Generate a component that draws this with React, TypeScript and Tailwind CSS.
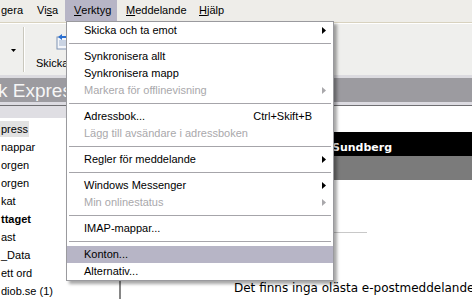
import React from "react";

type Item = {
  label?: string;
  sep?: boolean;
  disabled?: boolean;
  sub?: boolean;
  shortcut?: string;
  active?: boolean;
};

const items: Item[] = [
  { label: "Skicka och ta emot", sub: true },
  { sep: true },
  { label: "Synkronisera allt" },
  { label: "Synkronisera mapp" },
  { label: "Markera för offlinevisning", disabled: true, sub: true },
  { sep: true },
  { label: "Adressbok...", shortcut: "Ctrl+Skift+B" },
  { label: "Lägg till avsändare i adressboken", disabled: true },
  { sep: true },
  { label: "Regler för meddelande", sub: true },
  { sep: true },
  { label: "Windows Messenger", sub: true },
  { label: "Min onlinestatus", disabled: true, sub: true },
  { sep: true },
  { label: "IMAP-mappar..." },
  { sep: true },
  { label: "Konton...", active: true },
  { label: "Alternativ..." },
];

const folders = [
  { name: "press", selected: true },
  { name: "nappar" },
  { name: "orgen" },
  { name: "orgen" },
  { name: "kat" },
  { name: "ttaget", bold: true },
  { name: "ast" },
  { name: "_Data" },
  { name: "ett ord" },
  { name: "diob.se (1)" },
];

const Arrow = ({ color }: { color: string }) => (
  <svg width="4" height="7" viewBox="0 0 4 7">
    <polygon points="0,0 4,3.5 0,7" fill={color} />
  </svg>
);

const ToolsMenu = () => {
  return (
    <div className="absolute left-[66px] top-[21px] w-[268px] bg-white border border-[#9a9a9e] shadow-[3px_3px_3px_rgba(0,0,0,0.35)]">
      {items.map((it, i) =>
        it.sep ? (
          <div key={i} className="h-[9px] flex items-center px-[2px]">
            <div className="h-px w-full bg-[#a6a5aa]" />
          </div>
        ) : (
          <div
            key={i}
            className={`h-[17px] flex items-center pl-[17px] ${
              it.active ? "bg-[#b7b5c6]" : ""
            } ${it.disabled ? "text-[#a9a8ab]" : "text-black"}`}
          >
            <span className="flex-1 whitespace-nowrap">{it.label}</span>
            {it.shortcut && <span className="whitespace-nowrap">{it.shortcut}</span>}
            <span className="w-[21px] pl-[10px] flex items-center">
              {it.sub && <Arrow color={it.disabled ? "#a9a8ab" : "#000"} />}
            </span>
          </div>
        )
      )}
    </div>
  );
};

export default function App() {
  return (
    <div className="relative w-[472px] h-[300px] overflow-hidden bg-white text-[11px] leading-none font-['Liberation_Sans',Arial,sans-serif] text-black">
      {/* menu bar */}
      <div className="h-[23px] bg-[#eeede9] border-b border-[#d8d2bf] flex">
        <div className="w-[30px] h-[21px] flex items-center pl-[1px]">gera</div>
        <div className="w-[35px] h-[21px] flex items-center pl-[7px]">
          Vi<span className="underline">s</span>a
        </div>
        <div className="w-[52px] h-[21px] flex items-center pl-[9px] bg-[#b7b5c6]">
          <span className="underline">V</span>erktyg
        </div>
        <div className="w-[75px] h-[21px] flex items-center pl-[9px]">
          <span className="underline">M</span>eddelande
        </div>
        <div className="h-[21px] flex items-center pl-[7px]">
          <span className="underline">H</span>jälp
        </div>
      </div>

      {/* toolbar */}
      <div className="h-[52px] bg-[#efefed] border-t border-white flex">
        <div className="w-[23px] flex items-center justify-center pl-[3px] pt-[1px]">
          <svg width="5" height="3" viewBox="0 0 5 3">
            <polygon points="0,0 5,0 2.5,3" fill="#000" />
          </svg>
        </div>
        <div className="my-[3px] w-[2px] border-l border-[#c9c7bd] border-r border-r-white" />
        <div className="flex flex-col pl-[11px] pt-[10px]">
          <svg width="16" height="16" viewBox="0 0 16 16" className="ml-[18px]">
            <rect x="3" y="3" width="11" height="12" fill="#f4f6fa" stroke="#7f93b4" />
            <line x1="5" y1="7" x2="12" y2="7" stroke="#9fb1cc" />
            <line x1="5" y1="9" x2="12" y2="9" stroke="#9fb1cc" />
            <line x1="5" y1="11" x2="12" y2="11" stroke="#9fb1cc" />
            <polygon points="4,3 8,0 8,2 14,2 14,4 8,4 8,6" fill="#2a6fd0" />
          </svg>
          <span className="mt-[8px] whitespace-nowrap">Skicka/ta emot</span>
        </div>
      </div>

      {/* title band */}
      <div className="h-[3px] bg-[#dcdbe0]" />
      <div className="h-[24px] bg-[#9c9ba0] flex items-center overflow-hidden">
        <span className="-ml-[2px] text-[19px] text-[#f6f6f6] whitespace-nowrap">k Express</span>
      </div>
      <div className="h-[3px] bg-[#dcdbe1]" />
      <div className="h-px bg-[#6f6f72]" />

      {/* main */}
      <div className="flex h-[193px]">
        <div className="w-[121px] shrink-0 border-r-2 border-[#868686] flex flex-col">
          <div className="h-[17px] bg-[#dfdee3]" />
          <div className="flex flex-col pt-[1px]">
            {folders.map((f, i) => (
              <div key={i} className="h-[18px] flex items-end">
                <span
                  className={`h-[16px] flex items-center pl-[1px] pr-[1px] whitespace-nowrap ${
                    f.selected ? "bg-[#e2e2e2]" : ""
                  } ${f.bold ? "font-bold" : ""}`}
                >
                  {f.name}
                </span>
              </div>
            ))}
          </div>
        </div>
        <div className="flex-1 min-w-0 overflow-hidden bg-white pt-[26px] flex flex-col">
          <div className="ml-[12px] h-[24px] bg-black flex items-end pb-[3px] text-white font-bold font-['DejaVu_Sans',sans-serif] text-[11px] whitespace-nowrap overflow-hidden">
            <span className="w-[199px] shrink-0 overflow-hidden">Outlook Express för</span>
            <span>Sundberg</span>
          </div>
          <div className="ml-[12px] h-[24px] bg-[#7b7b7b]" />
          <div className="ml-[12px] mt-[52px] w-[234px] h-px bg-[#c8c8c8]" />
          <div className="mt-[49px] pl-[113px] whitespace-nowrap font-['DejaVu_Sans',sans-serif] text-[12px] text-black">
            Det finns inga olästa e-postmeddelanden
          </div>
        </div>
      </div>

      <ToolsMenu />
    </div>
  );
}
